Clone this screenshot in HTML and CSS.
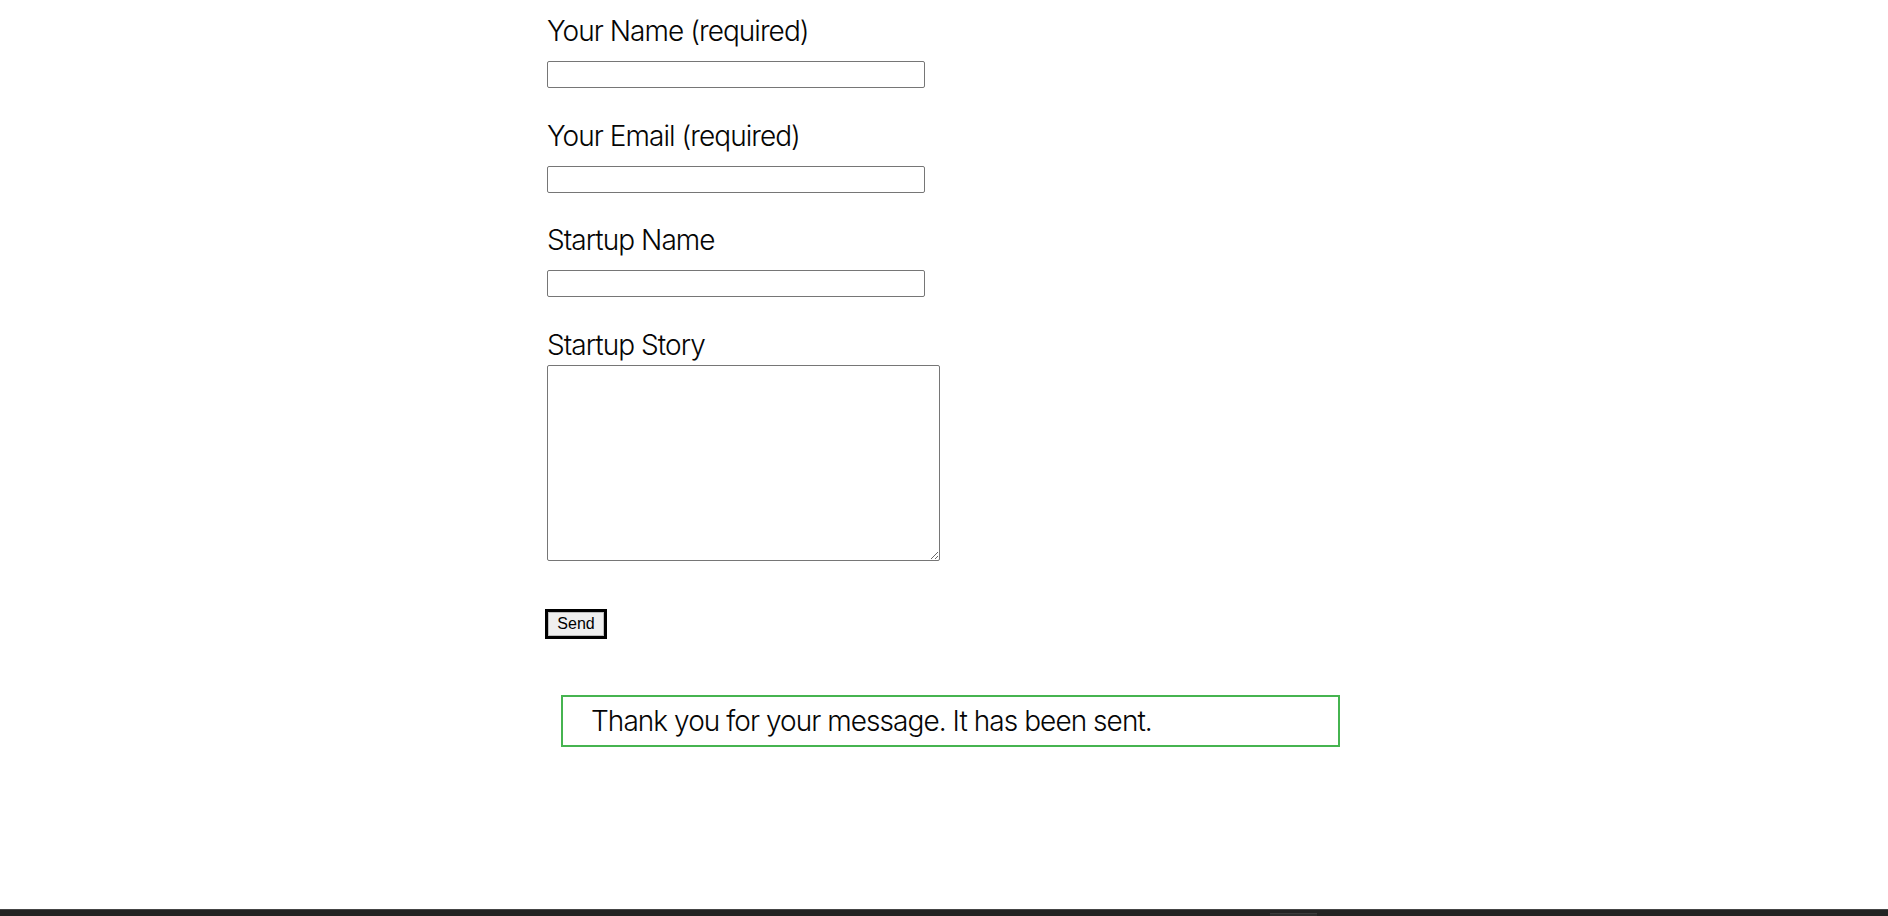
FILE: index.html
```html
<!DOCTYPE html>
<html lang="en">

<head>
    <meta charset="UTF-8">
    <meta name="viewport" content="width=device-width, initial-scale=1.0">
    <title>Contact</title>
    <link rel="stylesheet" href="styles.css">
</head>

<body>
    <div id="main">
        <form class="form" action="javascript:;">
            <div class="field">
                <label class="label" for="your-name">Your Name (required)</label>
                <input class="input" type="text" id="your-name">
            </div>
            <div class="field">
                <label class="label" for="your-email">Your Email (required)</label>
                <input class="input" type="email" id="your-email">
            </div>
            <div class="field">
                <label class="label" for="startup-name">Startup Name</label>
                <input class="input" type="text" id="startup-name">
            </div>
            <div class="field field-story">
                <label class="label" for="startup-story">Startup Story</label>
                <textarea class="textarea" id="startup-story"></textarea>
            </div>
            <button class="send" type="submit">Send</button>
            <div class="response">Thank you for your message. It has been sent.</div>
        </form>
    </div>
    <div class="footer">
        <span class="totop"></span>
    </div>
</body>

</html>
```

FILE: styles.css
```css
* {
    margin: 0;
    padding: 0;
    box-sizing: border-box;
}

body {
    background: #fff;
    color: #050505;
    font-family: Inter, "Noto Sans", sans-serif;
    font-weight: 300;
    overflow: hidden;
}

#main {
    width: 794px;
    margin: 0 auto;
    padding-top: 15px;
    height: 909px;
}

.field {
    display: flex;
    flex-direction: column;
    align-items: flex-start;
    margin-bottom: 31.5px;
}

.label {
    font-size: 28px;
    line-height: 32px;
    letter-spacing: -0.95px;
}

.input {
    margin-top: 14px;
    width: 378px;
    height: 27px;
    border: 1px solid #767676;
    border-radius: 2px;
    background: #fff;
}

.field-story {
    margin-bottom: 0;
}

.textarea {
    margin-top: 4px;
    width: 393px;
    height: 196px;
    border: 1px solid #767676;
    border-radius: 2px;
    resize: both;
}

.send {
    display: block;
    margin: 48px 0 0 -2px;
    width: 62px;
    height: 30px;
    border: 3px solid #000;
    box-shadow: inset 0 0 0 1px #bdbdbd;
    background: #efefef;
    color: #000;
    font-family: "Liberation Sans", Arial, sans-serif;
    font-size: 16px;
    font-weight: 400;
}

.response {
    margin: 56px 0 0 14px;
    width: 779px;
    border: 2px solid #46b450;
    padding: 8px 28px;
    font-size: 28px;
    line-height: 32px;
    letter-spacing: -0.95px;
}

.footer {
    height: 7px;
    background: #232323;
    border-top: 1px solid #454545;
    position: relative;
}

.totop {
    position: absolute;
    left: 1270px;
    top: 3px;
    width: 47px;
    height: 3px;
    background: #2e2e2e;
    border-top: 1px solid #3c3c3c;
}
```
